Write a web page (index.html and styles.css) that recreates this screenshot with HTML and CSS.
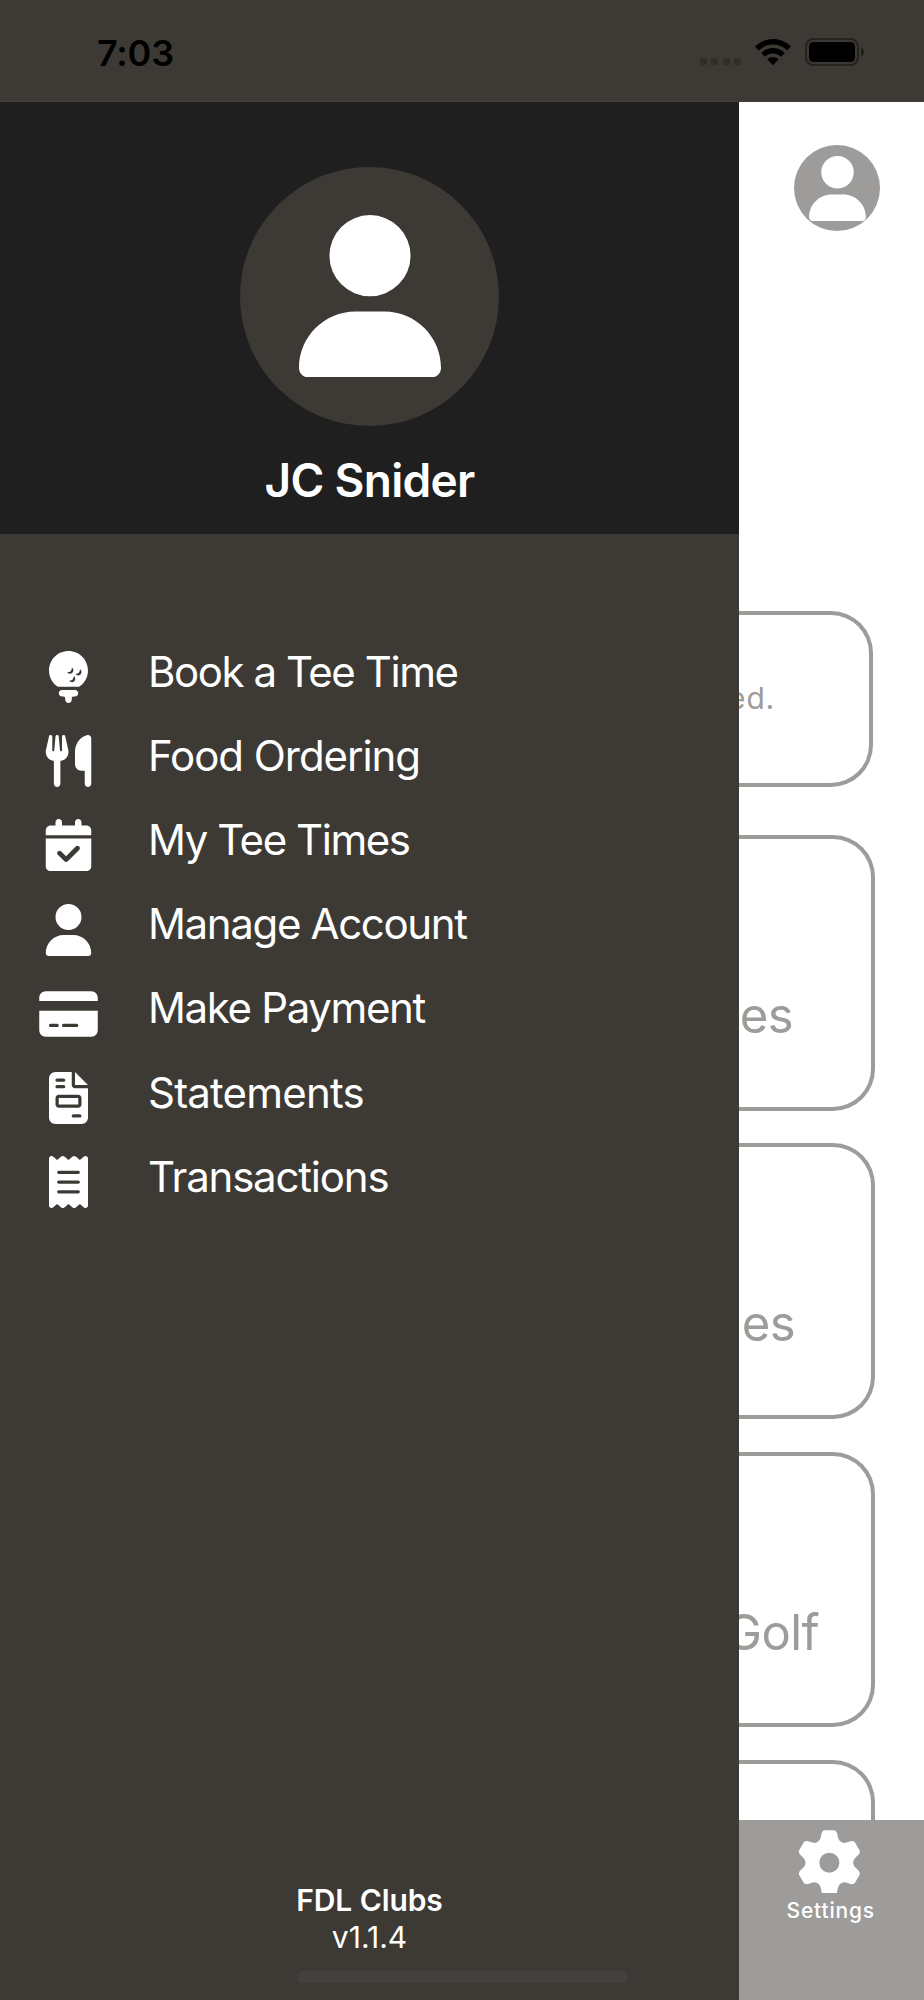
FILE: index.html
```
<!DOCTYPE html>
<html lang="en">
<head>
  <meta charset="UTF-8">
  <title>FDL Clubs</title>
  <link rel="stylesheet" href="styles.css">
</head>
<body>
  <svg class="symbols">
    <symbol id="user" viewBox="0 0 448 512">
      <path d="M224 256A128 128 0 1 0 224 0a128 128 0 1 0 0 256zm-45.7 48C79.8 304 0 383.8 0 482.3C0 498.7 13.3 512 29.7 512H418.3c16.4 0 29.7-13.3 29.7-29.7C448 383.8 368.2 304 269.7 304H178.3z"/>
    </symbol>
    <path id="tooth" d="M0 0L-36-62Q-27-66-25-80Q-23-97-13-97H13Q23-97 25-80Q27-66 36-62z"/>
  </svg>

  <div class="status-bar">
    <div class="time">7:03</div>
    <div class="status-icons">
      <div class="dots"><i></i><i></i><i></i><i></i></div>
      <svg class="wifi" viewBox="0 0 36 27">
        <path d="M0 7.6C10-2.5 26-2.5 36 7.6L32.2 11.5C24.2 3.6 11.8 3.6 3.8 11.5z"/>
        <path d="M6.2 14C12.8 7.4 23.2 7.4 29.8 14L26 17.8C21.5 13.4 14.5 13.4 10 17.8z"/>
        <path d="M12.4 20.2C15.6 17.2 20.4 17.2 23.6 20.2L18 26.2z"/>
      </svg>
      <svg class="battery" viewBox="0 0 60 28">
        <rect x="1" y="1" width="52" height="26" rx="7.5" fill="none" stroke="#26231f" stroke-width="2"/>
        <rect x="4" y="4" width="46" height="20" rx="4.5"/>
        <path d="M56 9.5c4 1.6 4 7.4 0 9z" fill="#211f1c"/>
      </svg>
    </div>
  </div>

  <div class="page">
    <div class="drawer">
      <div class="profile">
        <div class="avatar"><svg><use href="#user"/></svg></div>
        <div class="name">JC Snider</div>
      </div>

      <ul class="menu">
        <li>
          <svg viewBox="0 0 384 512"><path d="M384 192c0 66.8-34.1 125.6-85.8 160H85.8C34.1 317.6 0 258.8 0 192C0 86 86 0 192 0S384 86 384 192zM242.1 256.6c0 18.5-15 33.5-33.5 33.5c-4.9 0-9.1 5.1-5.4 8.4c5.9 5.2 13.7 8.4 22.1 8.4c18.5 0 33.5-15 33.5-33.5c0-8.5-3.2-16.2-8.4-22.1c-3.3-3.7-8.4 .5-8.4 5.4zm-52.3-49.3c-4.9 0-9.1 5.1-5.4 8.4c5.9 5.2 13.7 8.4 22.1 8.4c18.5 0 33.5-15 33.5-33.5c0-8.5-3.2-16.2-8.4-22.1c-3.3-3.7-8.4 .5-8.4 5.4c0 18.5-15 33.5-33.5 33.5zm113.5-17.5c0 18.5-15 33.5-33.5 33.5c-4.9 0-9.1 5.1-5.4 8.4c5.9 5.2 13.7 8.4 22.1 8.4c18.5 0 33.5-15 33.5-33.5c0-8.5-3.2-16.2-8.4-22.1c-3.3-3.7-8.4 .5-8.4 5.4zM96 416c0-17.7 14.3-32 32-32h64 64c17.7 0 32 14.3 32 32s-14.3 32-32 32H240c-8.8 0-16 7.2-16 16v16c0 17.7-14.3 32-32 32s-32-14.3-32-32V464c0-8.8-7.2-16-16-16H128c-17.7 0-32-14.3-32-32z"/></svg>
          <span class="book">Book a Tee Time</span>
        </li>
        <li>
          <svg viewBox="0 0 448 512"><path d="M416 0C400 0 288 32 288 176V288c0 35.3 28.7 64 64 64h32V480c0 17.7 14.3 32 32 32s32-14.3 32-32V352 240 32c0-17.7-14.3-32-32-32zM64 16C64 7.8 57.9 1 49.7 .1S34.2 4.6 32.4 12.5L2.1 148.8C.7 155.1 0 161.5 0 167.9c0 45.9 35.1 83.6 80 87.7V480c0 17.7 14.3 32 32 32s32-14.3 32-32V255.6c44.9-4.1 80-41.8 80-87.7c0-6.4-.7-12.8-2.1-19.1L191.6 12.5c-1.8-8-9.3-13.3-17.4-12.4S160 7.8 160 16V150.2c0 5.4-4.4 9.8-9.8 9.8c-5.1 0-9.3-3.9-9.8-9L127.9 14.6C127.2 6.3 120.3 0 112 0s-15.2 6.3-15.9 14.6L83.7 151c-.5 5.1-4.7 9-9.8 9c-5.4 0-9.8-4.4-9.8-9.8V16z"/></svg>
          <span class="food">Food Ordering</span>
        </li>
        <li>
          <svg viewBox="0 0 448 512"><path d="M128 0c17.7 0 32 14.3 32 32V64H288V32c0-17.7 14.3-32 32-32s32 14.3 32 32V64h48c26.5 0 48 21.5 48 48v48H0V112C0 85.5 21.5 64 48 64H96V32c0-17.7 14.3-32 32-32zM0 192H448V464c0 26.5-21.5 48-48 48H48c-26.5 0-48-21.5-48-48V192zM329 305c9.4-9.4 9.4-24.6 0-33.9s-24.6-9.4-33.9 0l-95 95-47-47c-9.4-9.4-24.6-9.4-33.9 0s-9.4 24.6 0 33.9l64 64c9.4 9.4 24.6 9.4 33.9 0L329 305z"/></svg>
          <span class="times">My Tee Times</span>
        </li>
        <li>
          <svg><use href="#user"/></svg>
          <span class="account">Manage Account</span>
        </li>
        <li>
          <svg viewBox="0 0 576 512"><path d="M64 32C28.7 32 0 60.7 0 96v32H576V96c0-35.3-28.7-64-64-64H64zM576 224H0V416c0 35.3 28.7 64 64 64H512c35.3 0 64-28.7 64-64V224zM112 352h64c8.8 0 16 7.2 16 16s-7.2 16-16 16H112c-8.8 0-16-7.2-16-16s7.2-16 16-16zm112 16c0-8.8 7.2-16 16-16H368c8.8 0 16 7.2 16 16s-7.2 16-16 16H240c-8.8 0-16-7.2-16-16z"/></svg>
          <span class="payment">Make Payment</span>
        </li>
        <li>
          <svg viewBox="0 0 384 512"><path d="M64 0C28.7 0 0 28.7 0 64V448c0 35.3 28.7 64 64 64H320c35.3 0 64-28.7 64-64V160H256c-17.7 0-32-14.3-32-32V0H64zM256 0V128H384L256 0zM80 64h64c8.8 0 16 7.2 16 16s-7.2 16-16 16H80c-8.8 0-16-7.2-16-16s7.2-16 16-16zm0 64h64c8.8 0 16 7.2 16 16s-7.2 16-16 16H80c-8.8 0-16-7.2-16-16s7.2-16 16-16zm16 96H288c17.7 0 32 14.3 32 32v64c0 17.7-14.3 32-32 32H96c-17.7 0-32-14.3-32-32V256c0-17.7 14.3-32 32-32zm0 32v64H288V256H96zM240 416h64c8.8 0 16 7.2 16 16s-7.2 16-16 16H240c-8.8 0-16-7.2-16-16s7.2-16 16-16z"/></svg>
          <span class="statements">Statements</span>
        </li>
        <li>
          <svg viewBox="0 0 384 512"><path d="M14 2.2C22.5-1.7 32.5-.3 39.6 5.8L80 40.4 120.4 5.8c9-7.7 22.3-7.7 31.2 0L192 40.4 232.4 5.8c9-7.7 22.3-7.7 31.2 0L304 40.4 344.4 5.8c7.1-6.1 17.1-7.5 25.6-3.6s14 12.4 14 21.8V488c0 9.4-5.5 17.9-14 21.8s-18.5 2.5-25.6-3.6L304 471.6l-40.4 34.6c-9 7.7-22.3 7.7-31.2 0L192 471.6l-40.4 34.6c-9 7.7-22.3 7.7-31.2 0L80 471.6 39.6 506.2c-7.1 6.1-17.1 7.5-25.6 3.6S0 497.4 0 488V24C0 14.6 5.5 6.1 14 2.2zM96 144c-8.8 0-16 7.2-16 16s7.2 16 16 16H288c8.8 0 16-7.2 16-16s-7.2-16-16-16H96zM80 352c0 8.8 7.2 16 16 16H288c8.8 0 16-7.2 16-16s-7.2-16-16-16H96c-8.8 0-16 7.2-16 16zM96 240c-8.8 0-16 7.2-16 16s7.2 16 16 16H288c8.8 0 16-7.2 16-16s-7.2-16-16-16H96z"/></svg>
          <span class="transactions">Transactions</span>
        </li>
      </ul>

      <div class="drawer-footer">
        <div class="club">FDL Clubs</div>
        <div class="version">v1.1.4</div>
      </div>
    </div>

    <div class="content">
      <div class="account-btn"><svg><use href="#user"/></svg></div>
      <div class="cards">
        <div class="notice"><span>ed.</span></div>
        <div class="card"><span>es</span></div>
        <div class="card messages"><span>ges</span></div>
        <div class="card golf"><span>Golf</span></div>
        <div class="card"></div>
      </div>
      <div class="tab-bar">
        <svg class="gear" viewBox="-94 -98 188 190">
          <circle r="68"/>
          <use href="#tooth"/>
          <use href="#tooth" transform="rotate(60)"/>
          <use href="#tooth" transform="rotate(120)"/>
          <use href="#tooth" transform="rotate(180)"/>
          <use href="#tooth" transform="rotate(240)"/>
          <use href="#tooth" transform="rotate(300)"/>
          <circle class="hole" r="30"/>
        </svg>
        <div class="tab-label">Settings</div>
      </div>
    </div>
  </div>

  <div class="home-indicator"></div>
</body>
</html>
```
FILE: styles.css
```
* {
  box-sizing: border-box;
}

body {
  margin: 0;
  height: 2000px;
  overflow: hidden;
  display: flex;
  flex-direction: column;
  background-color: #fff;
  font-family: Inter, "Liberation Sans", sans-serif;
}

.symbols {
  display: none;
}

/* Status bar */
.status-bar {
  height: 102px;
  flex: none;
  display: flex;
  justify-content: space-between;
  padding: 0 59px 0 97px;
  background-color: #3d3a35;
  border-bottom: 1px solid #45423e;
}

.time {
  padding-top: 31px;
  font-size: 36px;
  line-height: 44px;
  font-weight: 600;
  letter-spacing: -0.2px;
}

.status-icons {
  display: flex;
  align-items: flex-start;
  padding-top: 38px;
}

.dots {
  display: flex;
  gap: 4.5px;
  margin: 20px 14px 0 0;
}

.dots i {
  width: 7px;
  height: 7px;
  border-radius: 2px;
  background-color: #312e2a;
}

.wifi {
  width: 36px;
  height: 27px;
  margin: 1px 14px 0 0;
}

.battery {
  width: 60px;
  height: 28px;
}

.page {
  flex: 1;
  display: flex;
  min-height: 0;
}

/* Drawer */
.drawer {
  width: 739px;
  display: flex;
  flex-direction: column;
  background-color: #3d3a35;
  color: #fff;
}

.drawer svg,
.content svg {
  fill: #fff;
}

.profile {
  height: 431.5px;
  padding-top: 64.5px;
  display: flex;
  flex-direction: column;
  align-items: center;
  background-color: #1f1f1f;
}

.avatar {
  width: 259px;
  height: 259px;
  display: flex;
  align-items: center;
  justify-content: center;
  border-radius: 50%;
  background-color: #3d3a35;
}

.avatar svg {
  width: 142px;
  height: 162.5px;
}

.name {
  margin-top: 26.5px;
  font-size: 46px;
  line-height: 56px;
  font-weight: 600;
  letter-spacing: -0.7px;
}

.menu {
  flex: 1;
  margin: 0;
  padding: 101.5px 0 0 39px;
  list-style-type: none;
}

.menu li {
  display: flex;
  align-items: center;
  height: 84.2px;
}

.menu svg {
  width: 59px;
  height: 52px;
  margin-right: 50px;
}

.menu span {
  padding-bottom: 11px;
  font-size: 42px;
  line-height: 50px;
}

.menu .book,
.menu .times {
  letter-spacing: -1.45px;
}

.menu .food {
  letter-spacing: -1.05px;
}

.menu .account,
.menu .payment {
  letter-spacing: -1.35px;
}

.menu .statements {
  letter-spacing: -0.8px;
}

.menu .transactions {
  letter-spacing: -1.2px;
}

.drawer-footer {
  height: 118px;
  text-align: center;
  font-size: 30px;
  line-height: 37px;
}

.club {
  font-weight: 600;
  letter-spacing: -0.1px;
}

/* Page behind the drawer */
.content {
  flex: 1;
  min-width: 0;
  display: flex;
  flex-direction: column;
  overflow: hidden;
  color: #9d9c9a;
}

.account-btn {
  width: 86px;
  height: 86px;
  flex: none;
  margin: 43px 0 0 55px;
  display: flex;
  align-items: center;
  justify-content: center;
  border-radius: 50%;
  background-color: #9d9c9a;
}

.account-btn svg {
  width: 57px;
  height: 65px;
}

.cards {
  flex: 1;
  min-height: 0;
  margin-top: 380px;
  overflow: hidden;
}

.notice,
.card {
  display: flex;
  justify-content: flex-end;
  border: 4px solid #9d9c9a;
  border-left: none;
  border-radius: 0 42px 42px 0;
}

.notice {
  height: 176px;
  align-items: center;
  margin: 0 51px 48px 0;
  padding: 0 94px 2px 0;
  font-size: 30px;
  letter-spacing: 0.8px;
}

.card {
  height: 275.5px;
  margin: 0 49px 32.8px 0;
  padding: 145px 78px 0 0;
  font-size: 49px;
  line-height: 64px;
  letter-spacing: -0.6px;
}

.messages {
  padding-right: 76px;
}

.golf {
  padding-right: 52px;
}

.tab-bar {
  height: 180px;
  flex: none;
  display: flex;
  flex-direction: column;
  align-items: center;
  padding: 10px 4.5px 0 0;
  background-color: #9d9c9a;
  color: #fff;
}

.gear {
  width: 62.7px;
  height: 63.3px;
}

.gear .hole {
  fill: #9d9c9a;
}

.tab-label {
  margin: 4.5px 0 0 3px;
  font-size: 21px;
  line-height: 26px;
  font-weight: 500;
  letter-spacing: 0.8px;
}

.home-indicator {
  position: absolute;
  left: 297px;
  top: 1971px;
  width: 331px;
  height: 12px;
  border-radius: 6px;
  background-color: #434240;
}
```
